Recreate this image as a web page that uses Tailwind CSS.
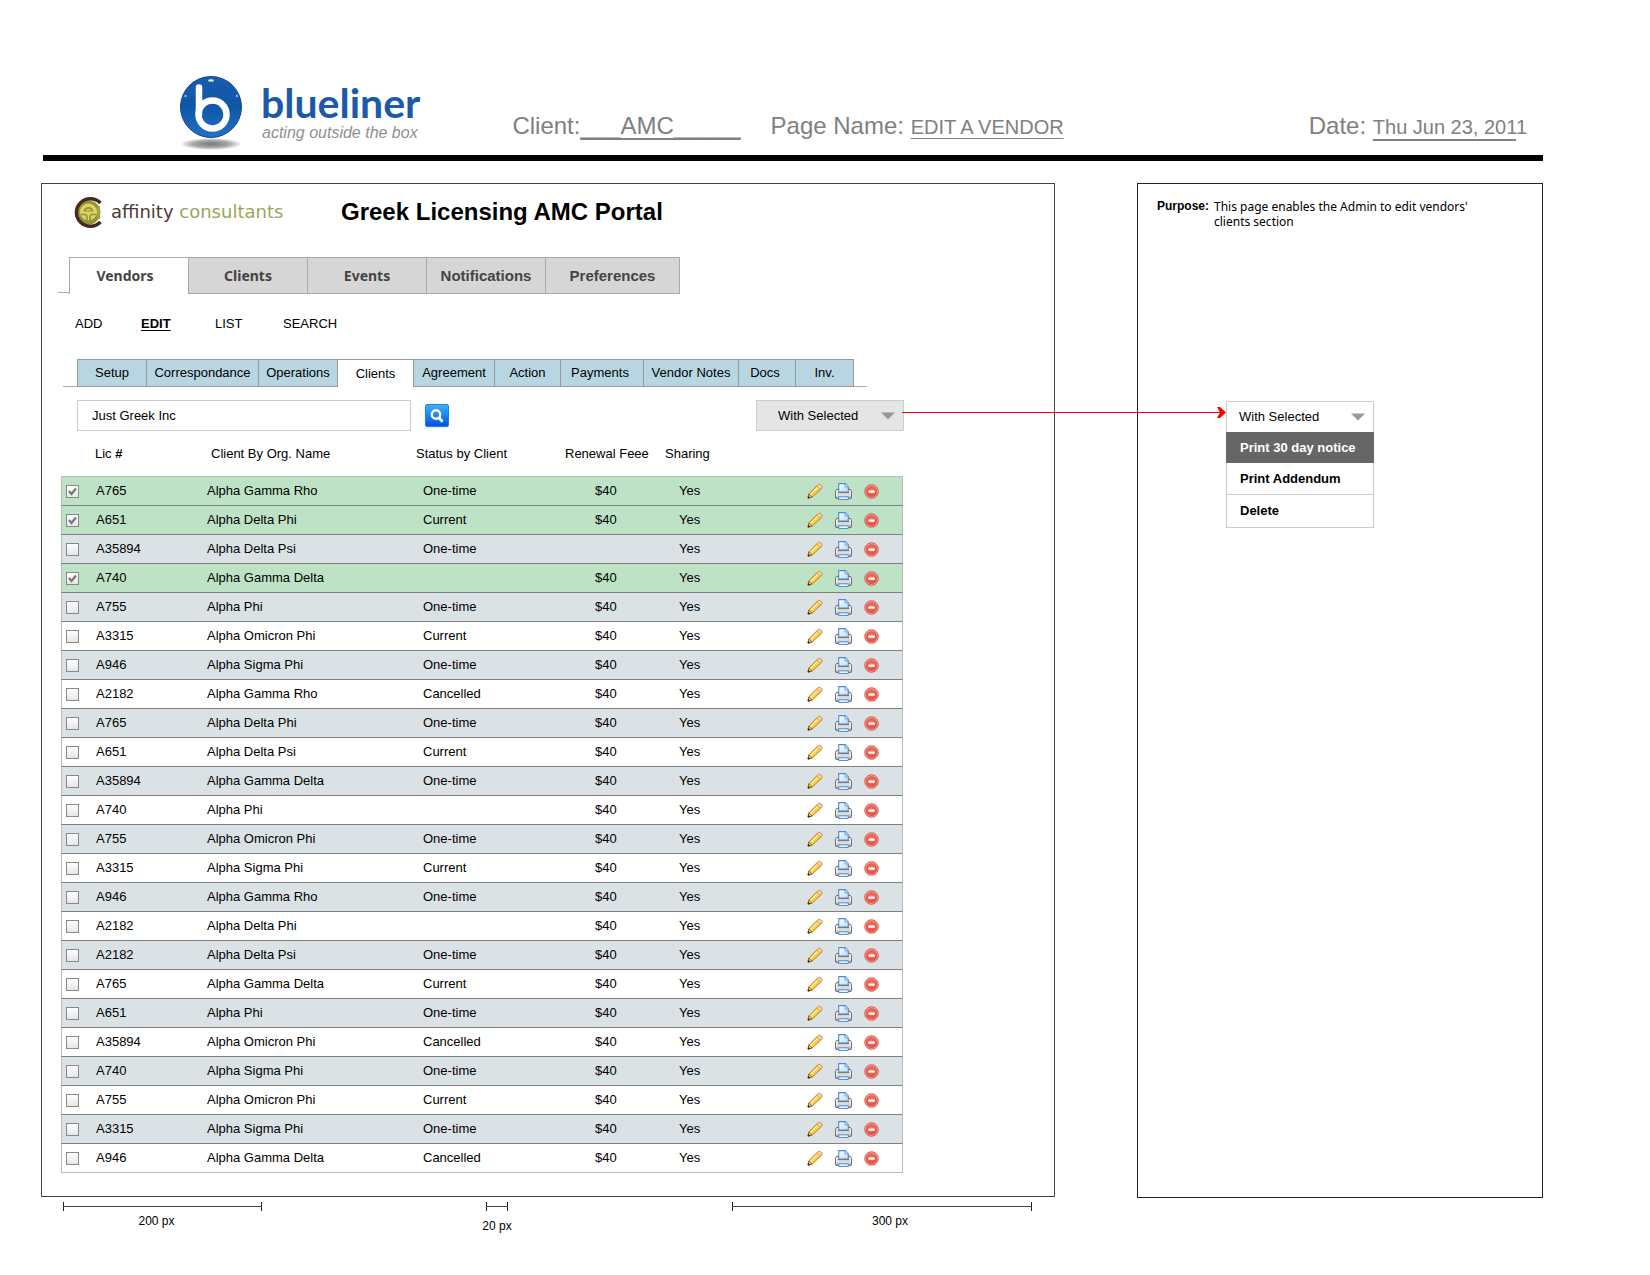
<!DOCTYPE html>
<html lang="en">
<head>
<meta charset="utf-8">
<title>Greek Licensing AMC Portal – Edit a Vendor</title>
<script src="https://cdn.jsdelivr.net/npm/@tailwindcss/browser@4"></script>
</head>
<body class="bg-white font-['Liberation_Sans',Arial,sans-serif] text-[13px] leading-4 text-black">

<svg class="absolute size-0" aria-hidden="true">
  <defs>
    <linearGradient id="gPencil" x1="0" y1="0" x2="1" y2="1"><stop offset="0" stop-color="#fff08a"/><stop offset="1" stop-color="#f2b91c"/></linearGradient>
    <linearGradient id="gPrinter" x1="0" y1="0" x2="0" y2="1"><stop offset="0" stop-color="#fafafa"/><stop offset="1" stop-color="#b0b0b0"/></linearGradient>
    <linearGradient id="gPaper" x1="0" y1="0" x2="1" y2="1"><stop offset="0" stop-color="#ffffff"/><stop offset="1" stop-color="#b9dcfa"/></linearGradient>
    <radialGradient id="gDelete" cx=".5" cy=".4" r=".6"><stop offset="0" stop-color="#f0796a"/><stop offset="1" stop-color="#e34a3c"/></radialGradient>
  </defs>
  <symbol id="pencil" viewBox="0 0 16 16">
    <path d="M1 15l.8-4L11 1.700q1.200-1 2.600.2l.8.800q1.200 1.400.1 2.600L5 14.200z" fill="url(#gPencil)" stroke="#b9791b"/>
    <path d="M10.200 2.800l3.200 3.200 1.100-1.200q.8-1-.2-2.100l-.8-.800q-1.100-1-2.200-.1z" fill="#fbd9b8" stroke="#d39a5a" stroke-width=".8"/>
    <path d="M3.800 11.200l6.200-6.300" stroke="#fffbd0" stroke-width="1"/>
    <path d="M1.800 11l3.200 3.100L1 15z" fill="#f3cf9a" stroke="#8a5a17" stroke-width=".8"/>
    <path d="M.7 15.500l.5-2.800 2.200 2.200z" fill="#3d2a10"/>
  </symbol>
  <symbol id="printer" viewBox="0 0 16 16">
    <path d="M1.500 14.500q-1-.2-1-1.300V8.500q0-1.800 1.500-2.500h12q1.500.7 1.500 2.500v4.700q0 1.100-1 1.300z" fill="url(#gPrinter)" stroke="#6f6f6f"/>
    <path d="M3.500 8.500V.6h6.200l2.800 2.900v5z" fill="url(#gPaper)" stroke="#4a8bd2"/>
    <path d="M9.500.8v2.900h2.800" fill="#fff" stroke="#4a8bd2" stroke-width=".8"/>
    <path d="M2.500 9h11" stroke="#777"/>
    <path d="M3 10h10v2.500H3z" fill="#dcdcdc"/>
    <path d="M3.500 13h9v2.500h-9z" fill="#eef6ff" stroke="#4a8bd2" stroke-width=".9"/>
    <path d="M1.700 7.500v5M14.300 7.500v5" stroke="#fff" stroke-width=".9"/>
  </symbol>
  <symbol id="remove" viewBox="0 0 16 16">
    <circle cx="8" cy="8" r="7.200" fill="#f7b3aa" stroke="#d8473b" stroke-width="1"/>
    <circle cx="8" cy="8" r="5.900" fill="url(#gDelete)"/>
    <rect x="4.500" y="6.800" width="7" height="2.400" rx=".4" fill="#fff"/>
  </symbol>
</svg>

<div class="pt-[68px] pb-8 pl-[41px] pr-[107px]">

  <header class="ml-[2px] flex h-[93px] items-end border-b-6 border-black text-2xl/8 text-[#808080]">
    <div class="flex items-start self-stretch pl-[135px]" aria-label="blueliner">
      <svg class="h-[84px] w-[68px] shrink-0" viewBox="0 0 68 84" aria-hidden="true">
        <defs>
          <linearGradient id="gBall" x1="0" y1="0" x2="0" y2="1"><stop offset="0" stop-color="#1c5cab"/><stop offset=".5" stop-color="#0f57a8"/><stop offset="1" stop-color="#2370c4"/></linearGradient>
          <radialGradient id="gShade"><stop offset="0" stop-color="#777"/><stop offset=".6" stop-color="#aaa"/><stop offset="1" stop-color="#fff"/></radialGradient>
        </defs>
        <ellipse cx="33" cy="76" rx="31" ry="6" fill="url(#gShade)"/>
        <circle cx="33" cy="39" r="30.500" fill="url(#gBall)" stroke="#0d478f"/>
        <path d="M21 19.500V46" stroke="#fff" stroke-width="6.500" stroke-linecap="round"/>
        <circle cx="34.500" cy="46.500" r="14" fill="none" stroke="#fff" stroke-width="6.500"/>
        <ellipse cx="33" cy="12.500" rx="3" ry="1.200" fill="#d6e8ff"/>
        <circle cx="7.500" cy="28" r="1.200" fill="#8fbcf0"/><circle cx="59" cy="28" r="1.200" fill="#8fbcf0"/>
      </svg>
      <div class="pl-[15px] pt-[14px]">
        <p class="font-[Lato,sans-serif] text-[41px]/[41px] font-bold text-[#1b5aa8]">blueliner</p>
        <p class="pl-px text-base/5 italic text-[#8f8f8f]">acting outside the box</p>
      </div>
    </div>
    <p class="ml-[92px] pb-[13px] whitespace-nowrap">Client:<span class="underline decoration-2 underline-offset-4">___AMC_____</span></p>
    <p class="ml-[30px] pb-[13px] whitespace-nowrap">Page Name: <span class="text-xl underline decoration-1 underline-offset-4">EDIT A VENDOR</span></p>
    <p class="ml-auto pr-4 pb-[13px] whitespace-nowrap">Date: <span class="text-xl"><span class="underline decoration-2 underline-offset-[5px]">Thu Jun 23, 201</span>1</span></p>
  </header>

  <div class="mt-[22px] flex gap-[82px]">
    <div class="min-w-0 flex-1">
      <main class="border border-[#444] pb-[23px]">
        <div class="flex h-14 items-center pl-[31px]">
          <div class="flex w-[268px] items-center gap-[7px] font-['DejaVu_Sans',sans-serif]">
            <svg class="size-[31px] shrink-0" viewBox="0 0 31 31" aria-hidden="true">
              <circle cx="15.500" cy="15.500" r="12" fill="#8d9636"/>
              <path d="M27.500 6A14 13.700 0 1 0 27.500 25" fill="none" stroke="#47291f" stroke-width="3.400"/>
              <path d="M25.500 9v13" stroke="#9fa645" stroke-width="3"/>
              <circle cx="15.500" cy="15" r="8.500" fill="#e3cf63"/>
              <path d="M10.500 14.500q.8-4.500 5-4.500t5 4.500z" fill="#8d9636"/>
              <path d="M12.500 13.500q.7-1.800 3-1.800t3 1.800z" fill="#e3cf63"/>
              <path d="M8 17.500h5q2 2 .5 7.500M23 17.500h-5q-2 2-.5 7.500" fill="none" stroke="#8d9636" stroke-width="1.600"/>
            </svg>
            <p class="whitespace-nowrap text-lg/6 text-[#4d3a34]">affinity <span class="text-[#9aa65c]">consultants</span></p>
          </div>
          <h1 class="text-2xl font-bold whitespace-nowrap">Greek Licensing AMC Portal</h1>
        </div>

        <nav class="mt-[17px] ml-4 flex h-[37px] text-[15px] font-bold text-[#444]" aria-label="Sections">
          <span class="mb-px w-[11px] border-b border-[#aaa]"></span>
          <a href="#" class="flex w-[119px] items-center justify-center border-t border-l border-[#aaa] pr-2 font-['Noto_Sans',sans-serif] text-sm" aria-current="page">Vendors</a>
          <a href="#" class="flex w-[119px] items-center justify-center border-y border-l border-[#aaa] bg-[#d6d6d6] font-['Noto_Sans',sans-serif] text-sm">Clients</a>
          <a href="#" class="flex w-[119px] items-center justify-center border-y border-l border-[#aaa] bg-[#d6d6d6] font-['Noto_Sans',sans-serif] text-sm">Events</a>
          <a href="#" class="flex w-[119px] items-center justify-center border-y border-l border-[#aaa] bg-[#d6d6d6]">Notifications</a>
          <a href="#" class="flex w-[135px] items-center justify-center border border-[#aaa] bg-[#d6d6d6]">Preferences</a>
        </nav>

        <nav class="flex h-[60px] items-center pl-[33px]" aria-label="Vendor actions">
          <a href="#" class="w-[66px]">ADD</a>
          <a href="#" class="w-[74px] font-bold underline decoration-1 underline-offset-2" aria-current="page">EDIT</a>
          <a href="#" class="w-[68px]">LIST</a>
          <a href="#">SEARCH</a>
        </nav>

        <nav class="mt-[5px] ml-[21px] flex h-7 whitespace-nowrap" aria-label="Vendor details">
          <span class="w-[14px] border-b border-[#aaa]"></span>
          <a href="#" class="flex w-[69px] items-center justify-center border-y border-l border-[#999] bg-[#b8d6e2]">Setup</a>
          <a href="#" class="flex w-[112px] items-center justify-center border-y border-l border-[#999] bg-[#b8d6e2]">Correspondance</a>
          <a href="#" class="flex w-[80px] items-center justify-center border-y border-x border-[#999] bg-[#b8d6e2]">Operations</a>
          <a href="#" class="flex w-[75px] items-center justify-center border-t border-[#999]" aria-current="page">Clients</a>
          <a href="#" class="flex w-[81px] items-center justify-center border-y border-l border-[#999] bg-[#b8d6e2]">Agreement</a>
          <a href="#" class="flex w-[66px] items-center justify-center border-y border-l border-[#999] bg-[#b8d6e2]">Action</a>
          <a href="#" class="flex w-[83px] items-center justify-center border-y border-l border-[#999] bg-[#b8d6e2] pr-1">Payments</a>
          <a href="#" class="flex w-[95px] items-center justify-center border-y border-l border-[#999] bg-[#b8d6e2]">Vendor Notes</a>
          <a href="#" class="flex w-[57px] items-center justify-center border-y border-l border-[#999] bg-[#b8d6e2] pr-1">Docs</a>
          <a href="#" class="flex w-[59px] items-center justify-center border border-[#999] bg-[#b8d6e2]">Inv.</a>
          <span class="w-[13px] border-b border-[#aaa]"></span>
        </nav>

        <form class="mt-[13px] mr-[150px] ml-[35px] flex h-[31px] items-center">
          <input type="text" value="Just Greek Inc" aria-label="Vendor name" class="h-full w-[334px] border border-[#ccc] px-[14px]">
          <button type="button" aria-label="Search" class="ml-[14px] grid h-[23px] w-6 place-items-center rounded-xs border border-[#2087dd] bg-linear-to-b from-[#3fb0f8] to-[#0b4fe0] shadow-sm">
            <svg class="size-4" viewBox="0 0 16 16" fill="none" stroke="#fff" aria-hidden="true"><circle cx="7" cy="6.500" r="4.200" stroke-width="2.400"/><path d="M10 9.800l3.600 4" stroke-width="2.800"/></svg>
          </button>
          <div class="relative ml-auto h-full w-[148px]">
            <select aria-label="With selected" class="size-full appearance-none border border-[#ccc] bg-[#e5e5e5] pl-[21px]">
              <option>With Selected</option><option>Print 30 day notice</option><option>Print Addendum</option><option>Delete</option>
            </select>
            <svg class="pointer-events-none absolute top-3 right-[9px] h-2 w-[14px]" viewBox="0 0 14 8" aria-hidden="true"><path d="M0 .5h14l-7 7z" fill="#999"/></svg>
          </div>
        </form>

        <div class="mr-[151px] ml-[19px]">
          <table class="w-full table-fixed border-separate border-spacing-0 text-left">
            <colgroup><col class="w-[34px]"><col class="w-[111px]"><col class="w-[209px]"><col class="w-[149px]"><col class="w-[100px]"><col class="w-[142px]"><col></colgroup>
            <thead>
              <tr class="h-[45px]">
                <th aria-label="Select"></th>
                <th class="font-normal">Lic <b>#</b></th>
                <th class="pl-[5px] font-normal">Client By Org. Name</th>
                <th class="pl-px font-normal">Status by Client</th>
                <th class="pl-px font-normal">Renewal Feee</th>
                <th class="pl-px font-normal">Sharing</th>
                <th aria-label="Actions"></th>
              </tr>
            </thead>
            <tbody id="rows"></tbody>
          </table>
        </div>
      </main>

      <div class="mt-[5px] flex pl-[22px] text-xs/4" aria-label="Scale">
        <div class="w-[199px]">
          <svg class="h-[10px] w-full" aria-hidden="true"><path d="M.5 0v9M198.500 0v9" stroke="#222"/><rect y="4" width="199" height="1" fill="#444"/></svg>
          <p class="pt-px pr-3 text-center">200 px</p>
        </div>
        <div class="ml-[224px] w-[22px]">
          <svg class="h-[10px] w-full" aria-hidden="true"><path d="M.5 0v9M21.500 0v9" stroke="#222"/><rect y="4" width="22" height="1" fill="#444"/></svg>
          <p class="flex justify-center pt-[6px] whitespace-nowrap">20 px</p>
        </div>
        <div class="ml-auto mr-[23px] w-[300px]">
          <svg class="h-[10px] w-full" aria-hidden="true"><path d="M.5 0v9M299.500 0v9" stroke="#222"/><rect y="4" width="300" height="1" fill="#444"/></svg>
          <p class="pt-px pl-4 text-center">300 px</p>
        </div>
      </div>
    </div>

    <aside class="mb-9 w-[406px] shrink-0 border border-[#222]">
      <div class="flex gap-[5px] pt-[15px] pl-[19px] text-xs/[15px]">
        <p class="font-bold">Purpose:</p>
        <p class="w-[270px] font-['Noto_Sans',sans-serif]">This page enables the Admin to edit vendors' clients section</p>
      </div>
      <div class="relative mt-[172px] ml-[88px] w-[148px] border border-[#ccc]">
        <button type="button" aria-expanded="true" class="flex h-[30px] w-full items-center justify-between pr-2 pl-3">With Selected
          <svg class="h-2 w-[14px]" viewBox="0 0 14 8" aria-hidden="true"><path d="M0 .5h14l-7 7z" fill="#999"/></svg>
        </button>
        <ul class="font-bold">
          <li class="-mx-px bg-[#666] text-white"><a href="#" class="flex h-[31px] items-center pl-[14px]">Print 30 day notice</a></li>
          <li class="border-b border-[#ccc]"><a href="#" class="flex h-[31px] items-center pl-[13px]">Print Addendum</a></li>
          <li><a href="#" class="flex h-8 items-center pl-[13px]">Delete</a></li>
        </ul>
        <svg class="absolute top-[5px] right-full h-[11px] w-[325px]" viewBox="0 0 325 11" aria-hidden="true"><path d="M0 5.500h322" stroke="#f00"/><path d="M315 0h3l6 5.500-6 5.500h-3l3-5.500z" fill="#f00"/></svg>
      </div>
    </aside>
  </div>
</div>

<script>
  const O = 'One-time', C = 'Current', X = 'Cancelled';
  const GR = 'Alpha Gamma Rho', DP = 'Alpha Delta Phi', DS = 'Alpha Delta Psi', GD = 'Alpha Gamma Delta',
        P = 'Alpha Phi', OP = 'Alpha Omicron Phi', SP = 'Alpha Sigma Phi';
  const data = [
    ['A765', GR, O, 1], ['A651', DP, C, 1], ['A35894', DS, O], ['A740', GD, '', 1],
    ['A755', P, O], ['A3315', OP, C], ['A946', SP, O], ['A2182', GR, X],
    ['A765', DP, O], ['A651', DS, C], ['A35894', GD, O], ['A740', P, ''],
    ['A755', OP, O], ['A3315', SP, C], ['A946', GR, O], ['A2182', DP, ''],
    ['A2182', DS, O], ['A765', GD, C], ['A651', P, O], ['A35894', OP, X],
    ['A740', SP, O], ['A755', OP, C], ['A3315', SP, O], ['A946', GD, X]
  ];
  document.getElementById('rows').innerHTML = data.map(([lic, name, status, on], i) => {
    const bg = on ? 'bg-[#bde2c6]' : i % 2 ? 'bg-white' : 'bg-[#dbe2e5]';
    const line = (i === 0 ? 'border-t border-t-[#bbb] ' : '') + (i === data.length - 1 ? 'border-b border-b-[#bbb]' : 'border-b border-b-[#808080]');
    const h = i === 0 ? 'h-[30px]' : 'h-[29px]';
    return `<tr class="${bg} ${h}">
      <td class="${line} border-l border-l-[#bbb] pl-1"><label class="grid size-[13px]">
        <input type="checkbox" ${on ? 'checked' : ''} aria-label="Select ${lic} ${name}" class="peer col-start-1 row-start-1 size-[13px] appearance-none border border-[#888] bg-linear-to-b from-white to-[#e6e6e6]">
        <svg class="invisible col-start-1 row-start-1 size-[13px] peer-checked:visible" viewBox="0 0 13 13" fill="none" stroke="#777" stroke-width="2.200" aria-hidden="true"><path d="M3 6l2.500 3L10 3.500"/></svg>
      </label></td>
      <td class="${line} pl-px">${lic}</td>
      <td class="${line} pl-px">${name}</td>
      <td class="${line} pl-2">${status}</td>
      <td class="${line} pl-[31px]">${i === 2 ? '' : '$40'}</td>
      <td class="${line} pl-[15px]">Yes</td>
      <td class="${line} border-r border-r-[#bbb]"><div class="flex items-center gap-3 pl-px">
        <button type="button" aria-label="Edit"><svg class="size-4"><use href="#pencil"/></svg></button>
        <button type="button" aria-label="Print"><svg class="size-[17px]"><use href="#printer"/></svg></button>
        <button type="button" aria-label="Delete"><svg class="size-[15px]"><use href="#remove"/></svg></button>
      </div></td>
    </tr>`;
  }).join('');
</script>
</body>
</html>
